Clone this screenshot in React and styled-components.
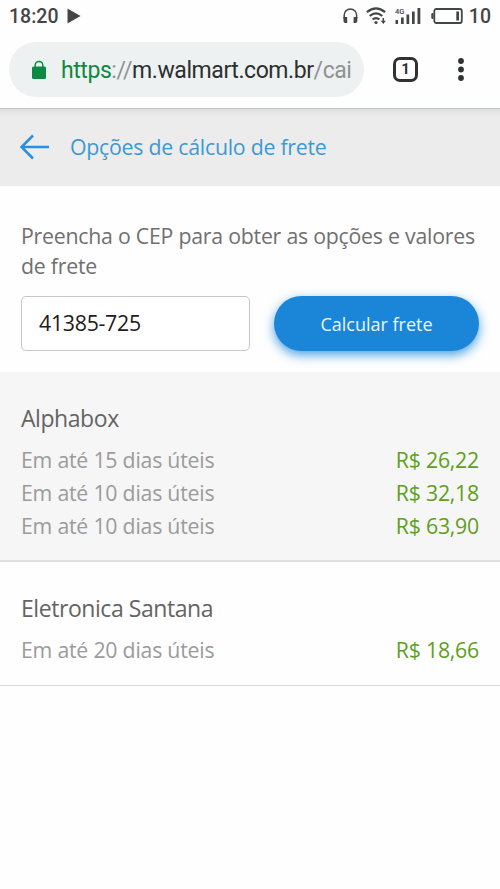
import React from "react";
import styled, { createGlobalStyle, css } from "styled-components";

const GlobalStyle = createGlobalStyle`
  * {
    box-sizing: border-box;
  }
  body {
    margin: 0;
    background: #fefefe;
    font-family: "Open Sans", "Noto Sans", sans-serif;
  }
`;

const Screen = styled.div`
  width: 500px;
  min-height: 889px;
  display: flex;
  flex-direction: column;
  overflow: hidden;
  background: #fefefe;
`;

const StatusBar = styled.div`
  height: 31px;
  padding: 0 9px;
  display: flex;
  align-items: center;
  justify-content: space-between;
  color: #444546;
`;

const StatusGroup = styled.div`
  display: flex;
  align-items: center;
  gap: ${(props) => props.$gap}px;
`;

const StatusText = styled.span`
  padding-top: 2px;
  font: 500 19.5px/29px Roboto, sans-serif;
`;

const Toolbar = styled.div`
  height: 78px;
  padding: 11px 0 11px 9px;
  display: flex;
  align-items: flex-start;
  border-bottom: 1px solid #c4c6c5;
`;

const Omnibox = styled.div`
  width: 355px;
  height: 55px;
  padding-left: 23px;
  display: flex;
  align-items: center;
  gap: 15px;
  border-radius: 28px;
  background: #eef1f1;

  svg {
    flex: none;
  }
`;

const Url = styled.div`
  padding-top: 2px;
  color: #8f9292;
  font: 400 23px/28px Roboto, sans-serif;
  letter-spacing: -0.43px;
  white-space: nowrap;
`;

const Scheme = styled.span`
  color: #0c8a42;
`;

const Host = styled.span`
  color: #2c2f30;
`;

const TabSwitcher = styled.button`
  width: 25px;
  height: 25px;
  margin: 15px 0 0 29px;
  padding: 0;
  border: 3px solid #2e3233;
  border-radius: 7px;
  background: none;
  color: #2e3233;
  font: 700 15px/19px Roboto, sans-serif;
`;

const MenuButton = styled.button`
  margin: 16px 0 0 40px;
  padding: 0;
  border: 0;
  background: none;
  display: flex;
`;

const PageHeader = styled.header`
  height: 77px;
  padding: 0 20px 2px;
  display: flex;
  align-items: center;
  gap: 20px;
  background: linear-gradient(#dcdddd, #ececec 7px);
`;

const PageTitle = styled.h1`
  margin: 0;
  color: #3d99d3;
  font-weight: 400;
  font-size: 21.3px;
  line-height: 28px;
  letter-spacing: -0.25px;
  white-space: nowrap;
`;

const CepForm = styled.div`
  height: 186px;
  padding: 35px 21px 0;
`;

const Instructions = styled.p`
  margin: 0 0 15px;
  color: #707070;
  font-size: 21.3px;
  line-height: 30px;
  letter-spacing: -0.24px;
`;

const FormRow = styled.div`
  display: flex;
  gap: 24px;
`;

const CepInput = styled.input`
  width: 229px;
  height: 55px;
  padding: 0 17px 2px;
  border: 1px solid #c6c6c6;
  border-radius: 5px;
  background: #fff;
  color: #1c1c1c;
  font: 400 21.3px "Open Sans", "Noto Sans", sans-serif;
  letter-spacing: -0.27px;
  outline: none;
`;

const SubmitButton = styled.button`
  width: 205px;
  height: 55px;
  padding: 0;
  border: 0;
  border-radius: 28px;
  background: #1b86d8;
  box-shadow: 0 4px 11px rgba(27, 140, 220, 0.8);
  color: #e9f7fd;
  font: 400 18px "Open Sans", "Noto Sans", sans-serif;
`;

const Seller = styled.section`
  padding: 30px 21px 19px;
  border-bottom: 1px solid #dcdcdc;
  ${(props) =>
    props.$shaded &&
    css`
      padding-bottom: 18px;
      border-bottom: 2px solid #e0e0e0;
      background: #f6f6f6;
    `}
`;

const SellerName = styled.h2`
  margin: 0 0 7.6px;
  color: #646464;
  font-weight: 400;
  font-size: 23px;
  line-height: 33px;
  letter-spacing: -0.44px;
`;

const Option = styled.div`
  display: flex;
  justify-content: space-between;
  color: #9b9b9b;
  font-size: 21.3px;
  line-height: 33.2px;
  letter-spacing: -0.23px;
`;

const Price = styled.span`
  color: #5f9f20;
`;

const HeadphonesIcon = () => (
  <svg width="15" height="16" viewBox="0 0 15 16">
    <path d="M1.2 11V7.2a6.2 6.2 0 0 1 12.4 0V11" fill="none" stroke="#444546" strokeWidth="1.5" />
    <path d="M.5 9h3.7v6H2.3A1.8 1.8 0 0 1 .5 13.2zM14.3 9h-3.7v6h1.9a1.8 1.8 0 0 0 1.8-1.8z" fill="#444546" />
  </svg>
);

const WifiIcon = () => (
  <svg width="21" height="18" viewBox="0 0 21 18">
    <g fill="none" stroke="#444546" strokeWidth="2.2">
      <path d="M.9 5.2Q10 -2.4 19.1 5.2" />
      <path d="M3.7 9Q10 3.6 16.3 9" />
      <path d="M6.6 12.5Q10 9.6 13.4 12.5" />
    </g>
    <circle cx="10" cy="15.5" r="1.6" fill="#444546" />
    <path d="M17.3 11v3.5" stroke="#444546" strokeWidth="1.5" />
    <path d="M14.7 13.7h5.2l-2.6 3.3z" fill="#444546" />
  </svg>
);

const SignalIcon = () => (
  <svg width="27" height="17" viewBox="0 0 27 17">
    <text x="0" y="6.5" fontSize="7.5" fontWeight="500" fontFamily="Roboto" fill="#444546">
      4G
    </text>
    <g fill="#444546">
      <rect x="0.5" y="13" width="2.5" height="4" />
      <rect x="6" y="10.5" width="2.7" height="6.5" />
      <rect x="11.5" y="7.5" width="2.7" height="9.5" />
      <rect x="17" y="4.5" width="2.7" height="12.5" />
      <rect x="22.5" y="1" width="2.8" height="16" />
    </g>
  </svg>
);

const Battery = styled.svg`
  margin: 0 -2px 0 1px;
`;

const BatteryIcon = () => (
  <Battery width="32" height="16" viewBox="0 0 32 16">
    <rect x="3.3" y="1" width="27.5" height="14" rx="2" fill="none" stroke="#444546" strokeWidth="1.8" />
    <path d="M2.5 5H1.5Q.3 5 .3 6.2v3.6Q.3 11 1.5 11h1z" fill="#444546" />
    <rect x="25.3" y="3.5" width="2.7" height="9" fill="#444546" />
  </Battery>
);

const LockIcon = () => (
  <svg width="14" height="20" viewBox="0 0 14 20">
    <path d="M3.2 8V5.2a3.8 3.8 0 0 1 7.6 0V8" fill="none" stroke="#0c8a42" strokeWidth="1.5" />
    <rect x="0" y="6.5" width="14" height="12.5" rx="1.5" fill="#0c8a42" />
  </svg>
);

const BackArrow = () => (
  <svg width="30" height="26" viewBox="0 0 30 26">
    <path
      d="M13 1.5L1.5 13L13 24.5M1.5 13H29"
      fill="none"
      stroke="#2b8fe0"
      strokeWidth="2.5"
    />
  </svg>
);

const sellers = [
  {
    name: "Alphabox",
    shaded: true,
    options: [
      { time: "Em até 15 dias úteis", price: "R$ 26,22" },
      { time: "Em até 10 dias úteis", price: "R$ 32,18" },
      { time: "Em até 10 dias úteis", price: "R$ 63,90" },
    ],
  },
  {
    name: "Eletronica Santana",
    options: [{ time: "Em até 20 dias úteis", price: "R$ 18,66" }],
  },
];

const App = () => (
  <Screen>
    <GlobalStyle />
    <StatusBar>
      <StatusGroup $gap={9}>
        <StatusText>18:20</StatusText>
        <svg width="14" height="16" viewBox="0 0 14 16">
          <path d="M.5 .5L13.5 8L.5 15.5z" fill="#444546" />
        </svg>
      </StatusGroup>
      <StatusGroup $gap={8}>
        <HeadphonesIcon />
        <WifiIcon />
        <SignalIcon />
        <BatteryIcon />
        <StatusText>10</StatusText>
      </StatusGroup>
    </StatusBar>

    <Toolbar>
      <Omnibox>
        <LockIcon />
        <Url>
          <Scheme>https</Scheme>://<Host>m.walmart.com.br</Host>/cai
        </Url>
      </Omnibox>
      <TabSwitcher>1</TabSwitcher>
      <MenuButton aria-label="Menu">
        <svg width="6" height="23" viewBox="0 0 6 23">
          <g fill="#2e3233">
            <circle cx="3" cy="3" r="2.9" />
            <circle cx="3" cy="11.5" r="2.9" />
            <circle cx="3" cy="20" r="2.9" />
          </g>
        </svg>
      </MenuButton>
    </Toolbar>

    <PageHeader>
      <BackArrow />
      <PageTitle>Opções de cálculo de frete</PageTitle>
    </PageHeader>

    <CepForm>
      <Instructions>Preencha o CEP para obter as opções e valores de frete</Instructions>
      <FormRow>
        <CepInput defaultValue="41385-725" />
        <SubmitButton>Calcular frete</SubmitButton>
      </FormRow>
    </CepForm>

    {sellers.map((seller) => (
      <Seller key={seller.name} $shaded={seller.shaded}>
        <SellerName>{seller.name}</SellerName>
        {seller.options.map((option) => (
          <Option key={option.price}>
            <span>{option.time}</span>
            <Price>{option.price}</Price>
          </Option>
        ))}
      </Seller>
    ))}
  </Screen>
);

export default App;
